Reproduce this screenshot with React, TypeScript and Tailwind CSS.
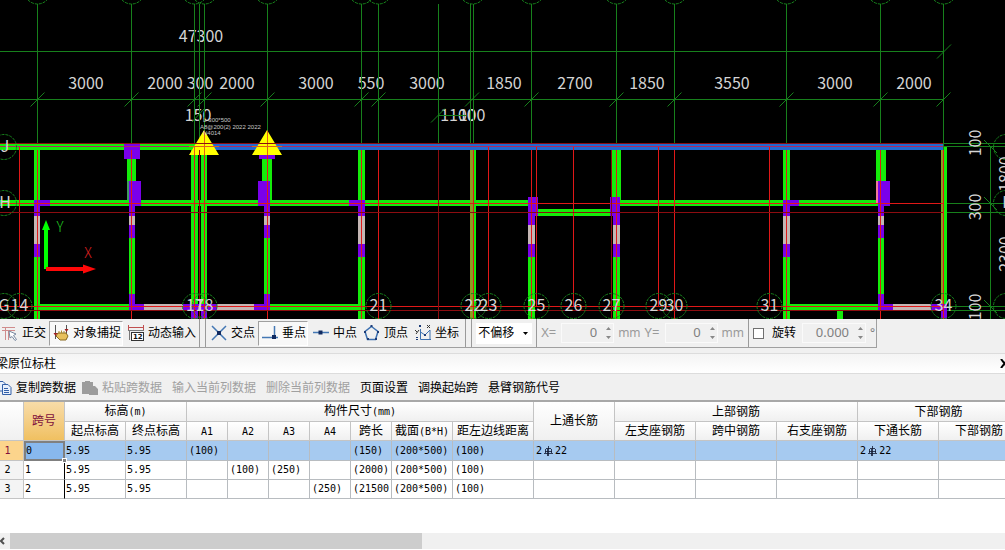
import React from 'react';

type Rect = [x: number, y: number, w: number, h: number];

const gridLines = [37.5, 131.5, 194.5, 199.5, 204.5, 267.5, 361.5, 378.5, 438.5, 470.5, 473.5, 531.5, 616.5, 674.5, 786.5, 880.5, 943.5];
const dimTicks = [37.5, 131.5, 194.5, 204.5, 267.5, 361.5, 378.5, 472, 531.5, 616.5, 674.5, 786.5, 880.5, 943.5];
const topBubbles = [37.5, 131.5, 194.5, 204.5, 267.5, 361.5, 378.5, 472.5, 531.5, 616.5, 674.5, 786.5, 880.5, 943.5];

const redLines = [37.5, 131.5, 194.5, 204.5, 267.5, 361.5, 378.5, 473.5, 531.5, 616.5, 674.5, 786.5, 880.5, 943.5];
const redShort = [19.5, 488.5, 536.5, 573.5, 658.5, 769.5];
const darkRed = [199.5, 438.5, 611.5];

const dims: [number, string][] = [
  [86, '3000'],
  [165, '2000'],
  [200, '300'],
  [237, '2000'],
  [316, '3000'],
  [371, '550'],
  [427, '3000'],
  [504, '1850'],
  [575, '2700'],
  [647, '1850'],
  [732, '3550'],
  [835, '3000'],
  [914, '2000'],
];

const bubbles: [number, string][] = [
  [4, 'G'],
  [19.5, '14'],
  [195, '17'],
  [204.5, '18'],
  [378.5, '21'],
  [473.5, '22'],
  [488.5, '23'],
  [536.5, '25'],
  [573.5, '26'],
  [611.5, '27'],
  [658.5, '29'],
  [674.5, '30'],
  [769.5, '31'],
  [943.5, '34'],
];

const greenBeams: Rect[] = [
  [0, 144, 204, 6],
  [0, 200, 528, 6],
  [620, 200, 258, 6],
  [538, 209, 72, 7],
  [34, 304, 95, 6],
  [270, 304, 88, 6],
  [790, 304, 88, 6],
  [34, 150, 6, 50],
  [34, 257, 6, 62],
  [127, 159, 9, 41],
  [129, 238, 6, 56],
  [191, 150, 7, 169],
  [201, 150, 6, 169],
  [262, 159, 10, 41],
  [264, 238, 6, 56],
  [358, 150, 7, 50],
  [358, 257, 7, 62],
  [473, 150, 3, 169],
  [528, 257, 7, 62],
  [612, 150, 9, 50],
  [613, 257, 7, 62],
  [783, 150, 7, 50],
  [783, 257, 7, 62],
  [876, 150, 10, 31],
  [878, 238, 6, 56],
  [944, 147, 3, 160],
  [837, 311, 6, 8],
];

const oliveBeams: Rect[] = [
  [470, 150, 3, 169],
  [941, 150, 3, 154],
];

const wallGaps: Rect[] = [
  [34, 216, 6, 28],
  [129, 216, 6, 9],
  [264, 216, 6, 9],
  [358, 216, 7, 28],
  [528, 225, 7, 19],
  [613, 225, 7, 19],
  [783, 216, 7, 28],
  [878, 216, 6, 9],
  [144, 304, 39, 6],
  [217, 304, 37, 6],
  [893, 304, 38, 6],
];

const columns: Rect[] = [
  [34, 200, 16, 6],
  [34, 206, 6, 10],
  [34, 244, 6, 13],
  [124, 144, 16, 15],
  [129, 181, 12, 25],
  [129, 206, 6, 10],
  [129, 225, 6, 13],
  [129, 294, 6, 16],
  [129, 304, 15, 6],
  [183, 304, 34, 6],
  [191, 304, 7, 15],
  [201, 304, 6, 15],
  [259, 144, 16, 15],
  [258, 181, 12, 25],
  [264, 206, 6, 10],
  [264, 225, 6, 13],
  [264, 294, 6, 16],
  [254, 304, 16, 6],
  [349, 200, 16, 6],
  [358, 206, 7, 10],
  [358, 244, 7, 13],
  [528, 197, 10, 19],
  [528, 216, 7, 9],
  [528, 244, 7, 13],
  [610, 197, 10, 19],
  [613, 216, 7, 9],
  [613, 244, 7, 13],
  [783, 200, 16, 6],
  [783, 206, 7, 10],
  [783, 244, 7, 13],
  [878, 181, 12, 25],
  [878, 206, 6, 10],
  [878, 225, 6, 13],
  [878, 294, 6, 16],
  [878, 304, 15, 6],
  [931, 304, 16, 6],
  [941, 304, 6, 15],
];

const sideDims: [number, number, string][] = [
  [981, 143, '100'],
  [981, 207, '300'],
  [981, 307, '100'],
  [1011, 174, '1800'],
  [1011, 254, '2300'],
];

function Rects({ items, className }: { items: Rect[]; className: string }) {
  return (
    <g className={className}>
      {items.map(([x, y, w, h], i) => (
        <rect key={i} x={x} y={y} width={w} height={h} />
      ))}
    </g>
  );
}

function Drawing() {
  return (
    <svg viewBox="0 0 1005 319" className="block h-auto w-full bg-black" role="img" aria-label="梁平面图">
      <g className="fill-[#d4d4d4] font-['Noto_Sans_CJK_SC',sans-serif] text-[16px]" textAnchor="middle">
        <text x="201" y="42">47300</text>
        {dims.map(([x, label]) => (
          <text key={x} x={x} y="89">
            {label}
          </text>
        ))}
        <text x="198" y="121">150</text>
        <text x="458" y="121">1100</text>
        <text x="472" y="121">100</text>
      </g>

      {/* Axis grid */}
      <g stroke="#17801c" fill="none" shapeRendering="crispEdges">
        {gridLines.map((x) => (
          <path key={x} d={`M${x} 4V150`} />
        ))}
        <path d="M0 51.5H944M0 99.5H944M438 115.5H466" />
        <path d="M944 143.5H1005M944 146.5H1005M944 203.5H1005M944 212.5H1005M944 306.5H1005M944 310.5H1005M990.5 147V319" />
      </g>
      <g stroke="#17801c" fill="none">
        {dimTicks.map((x) => (
          <path key={x} d={`M${x - 7} 106.5l14-14`} />
        ))}
        <path d="M937 58.5l14-14M431 122.5l14-14M192 122l12-13M984 140l13 13M984 197l13 13M984 300l13 13" />
      </g>
      <g stroke="#17801c" fill="none" strokeDasharray="3 1">
        {topBubbles.map((x) => (
          <circle key={x} cx={x} cy={-9} r={13} />
        ))}
      </g>

      {/* Beams and columns */}
      <Rects items={greenBeams} className="fill-[#14ec0a]" />
      <Rects items={oliveBeams} className="fill-[#8f9a20]" />
      <Rects items={wallGaps} className="fill-[#c4b6b4]" />
      <rect x="127" y="181" width="2" height="19" fill="#3f9a60" />
      <rect x="876" y="181" width="2" height="22" fill="#f07898" />
      <Rects items={columns} className="fill-[#7a00ea]" />
      <rect x="204" y="144" width="739" height="6" fill="#2268d0" />

      <g stroke="#e01818" fill="none" shapeRendering="crispEdges">
        {redLines.map((x) => (
          <path key={x} d={`M${x} 150V319`} />
        ))}
        {redShort.map((x) => (
          <path key={x} d={`M${x} 146V306`} />
        ))}
        <path d="M0 203.5H943M0 306.5H943" />
      </g>
      <path d="M0 146.5H943" stroke="#b02860" shapeRendering="crispEdges" />
      <path d="M204 130L219 155H189ZM267 130L282 155H252Z" fill="#ffff00" />
      <path d="M189 146.5H219M252 146.5H282M194.5 147V155M204.5 131V155M267.5 131V155" stroke="#e06018" shapeRendering="crispEdges" />
      <g stroke="#8c0c10" fill="none" shapeRendering="crispEdges">
        {darkRed.map((x) => (
          <path key={x} d={`M${x} 150V319`} />
        ))}
        <path d="M0 143.5H943M0 212.5H943M0 310.5H943" />
      </g>

      {/* Bubbles */}
      <g stroke="#17801c" fill="none" strokeDasharray="3 1">
        {bubbles.map(([x]) => (
          <circle key={x} cx={x} cy={306} r={12.5} />
        ))}
        <circle cx="4" cy="147" r="12.5" />
        <circle cx="4" cy="203" r="12.5" />
        <circle cx="1006" cy="147" r="12.5" />
        <circle cx="1006" cy="203" r="12.5" />
        <circle cx="1006" cy="306" r="12.5" />
      </g>

      <g className="fill-[#d4d4d4] font-['Noto_Sans_CJK_SC',sans-serif] text-[16px]" textAnchor="middle">
        {bubbles.map(([x, label]) => (
          <text key={x} x={x} y="311">
            {label}
          </text>
        ))}
        <text x="5" y="152">J</text>
        <text x="5" y="208">H</text>
        <text x="1008" y="208">H</text>
        {sideDims.map(([x, y, label]) => (
          <text key={`${x}-${y}`} transform={`translate(${x} ${y}) rotate(-90)`}>
            {label}
          </text>
        ))}
      </g>
      <g className="fill-[#c8c8c8] font-['Liberation_Sans',sans-serif] text-[6px]">
        <text x="203" y="122">L-300*500</text>
        <text x="200" y="129">A8@200(2) 2022 2022</text>
        <text x="203" y="135">N4014</text>
      </g>

      {/* UCS marker */}
      <path d="M44 269V230H42L46 220L50 230H48V269Z" fill="#00ff00" />
      <path d="M46 267H83V264.500L96 269L83 273.500V271H46Z" fill="#ff0808" />
      <g className="font-['Noto_Sans_CJK_SC',sans-serif] text-[14px] font-light" textAnchor="middle">
        <text x="60" y="232" fill="#20d020">Y</text>
        <text x="88" y="258" fill="#e02020">X</text>
      </g>
    </svg>
  );
}

const OrthoIcon = () => (
  <svg viewBox="0 0 16 16" className="size-4 shrink-0" fill="none">
    <path d="M0 2.500H13M0 5.500H13M3.500 2.500V15M6.500 5.500V15" stroke="#d08c8c" strokeWidth="1" />
    <path d="M7 6l7 3-2.500 1.500 3 4-1.500 1-3-4L8 13z" fill="#fff" stroke="#7888a0" />
  </svg>
);

const SnapIcon = () => (
  <svg viewBox="0 0 16 16" className="size-4 shrink-0" fill="none">
    <path d="M2.500 0V14M13.500 0V14M3 8.500H13" stroke="#555" />
    <path d="M5 8h8l2 3-2 4H7l-4-4z" fill="#e8c05c" stroke="#8a6a20" />
    <path d="M0.500 8l2 3 2-3zM11.500 4l2 3 2-3z" fill="#a02020" />
    <path d="M6 9V6M8.500 8V5.500M11 8V6" stroke="#b08a30" />
  </svg>
);

const DynInputIcon = () => (
  <svg viewBox="0 0 16 16" className="size-4 shrink-0" fill="none">
    <path d="M0.500 0V5M15.500 0V5M1 2.500H15" stroke="#c05050" />
    <path d="M0 5.500H16M1.500 6V15" stroke="#777" />
    <rect x="3.500" y="7.500" width="12" height="8" fill="#fff" stroke="#333" />
    <text x="5" y="14" className="font-['DejaVu_Sans',sans-serif] text-[7px] font-bold" fill="#111">12</text>
  </svg>
);

const CrossIcon = () => (
  <svg viewBox="0 0 16 16" className="size-4 shrink-0" fill="none">
    <path d="M1 1L15 15M15 1L1 15" stroke="#4478b4" strokeWidth="1.500" />
    <rect x="6" y="6" width="4" height="4" fill="#102a60" />
  </svg>
);

const PerpIcon = () => (
  <svg viewBox="0 0 16 16" className="size-4 shrink-0" fill="none">
    <path d="M0 12.500H16M12.500 1V12" stroke="#4478b4" strokeWidth="1.500" />
    <rect x="10" y="10" width="4" height="4" fill="#102a60" />
  </svg>
);

const MidIcon = () => (
  <svg viewBox="0 0 16 16" className="size-4 shrink-0" fill="none">
    <path d="M0 7.500H16" stroke="#4478b4" strokeWidth="1.500" />
    <rect x="5.500" y="5.500" width="4" height="4" fill="#102a60" />
  </svg>
);

const VertexIcon = () => (
  <svg viewBox="0 0 16 16" className="size-4 shrink-0" fill="none">
    <path d="M7.500 1.500L14 6.500L11.500 14.500H3.500L1 6.500Z" stroke="#3c70b0" strokeWidth="1.500" />
    <path d="M6.500 0h2v2h-2zM13 6h2v2h-2zM11 13h2v2h-2zM3 13h2v2H3zM0 6h2v2H0z" fill="#1c3c78" />
  </svg>
);

const CoordIcon = () => (
  <svg viewBox="0 0 16 16" className="size-4 shrink-0" fill="none">
    <path d="M5.500 4V14.500H16M5.500 14L5.500 7L10 10L15 5V14" stroke="#3c70b0" />
    <path d="M0 5l2 2m2-2L1 9M12 0l3 3m0-3l-3 3" stroke="#333" />
    <path d="M4 0h2v2H4zM9 9h2v2H9zM1 12h2v1H1zM1 14h2v1H1z" fill="#1c3c78" />
  </svg>
);

const CopyIcon = () => (
  <svg viewBox="0 0 16 16" className="size-4 shrink-0" fill="#e8f0fc" stroke="#3460a8">
    <path d="M1.500 1.500H7l3 3V11H1.500z" />
    <path d="M6.500 4.500H12l3 3V14.500H6.500zM8 8.500h4M8 10.500h5M8 12.500h5" />
  </svg>
);

const PasteIcon = () => (
  <svg viewBox="0 0 16 16" className="size-4 shrink-0" fill="#9c9c9c">
    <path d="M0 2h3V1h5v1h3v4h2l3 3v6H7v-1H0z" />
  </svg>
);

function ToolButton({ icon, label, pressed }: { icon: React.ReactNode; label: string; pressed?: boolean }) {
  return (
    <button
      type="button"
      aria-pressed={!!pressed}
      className={
        pressed
          ? 'flex h-[25px] shrink-0 items-center gap-1 whitespace-nowrap border border-t-[#a0a0a0] border-r-white border-b-white border-l-[#a0a0a0] bg-[#f8f8f8] pl-[3px] pr-px'
          : 'flex h-[25px] shrink-0 items-center gap-1 whitespace-nowrap border border-transparent pl-[3px] pr-px'
      }
    >
      {icon}
      {label}
    </button>
  );
}

function Separator() {
  return <div className="mx-px h-full w-[7px] shrink-0 border-x border-[#9a9a9a]" />;
}

function SpinBox({ label, value, wide }: { label: string; value: string; wide?: boolean }) {
  return (
    <span className="flex h-5 shrink-0 items-center border border-[#fafafa] pr-[2px]">
      <input
        type="text"
        aria-label={label}
        defaultValue={value}
        disabled
        className={
          wide
            ? 'w-[46px] bg-transparent text-right text-[13px] text-[#808080]'
            : 'w-[35px] bg-transparent text-right text-[13px] text-[#808080]'
        }
      />
      <svg viewBox="0 0 5 14" className="ml-[9px] h-[14px] w-[5px]" fill="#888">
        <path d="M0 4L2.500 1L5 4ZM0 10L2.500 13L5 10Z" />
      </svg>
    </span>
  );
}

function SnapToolbar() {
  return (
    <div className="overflow-hidden bg-[#f0f0f0] pb-[5px]">
      <div className="-ml-0.5 flex h-[29px] w-fit items-center border-r border-b border-[#a0a0a0]">
        <div className="flex items-center gap-px">
          <ToolButton icon={<OrthoIcon />} label="正交" />
          <ToolButton icon={<SnapIcon />} label="对象捕捉" pressed />
          <ToolButton icon={<DynInputIcon />} label="动态输入" />
        </div>
        <Separator />
        <div className="flex items-center gap-px">
          <ToolButton icon={<CrossIcon />} label="交点" />
          <ToolButton icon={<PerpIcon />} label="垂点" pressed />
          <ToolButton icon={<MidIcon />} label="中点" />
          <ToolButton icon={<VertexIcon />} label="顶点" />
          <ToolButton icon={<CoordIcon />} label="坐标" />
        </div>
        <div className="ml-1 h-full w-[7px] shrink-0 border-x border-[#9a9a9a]" />
        <div className="relative ml-1 flex h-[21px] items-center">
          <select aria-label="偏移方式" className="h-full w-14 appearance-none bg-white pl-0.5">
            <option>不偏移</option>
          </select>
          <svg viewBox="0 0 5 3" className="pointer-events-none absolute right-1 h-[3px] w-[5px]">
            <path d="M0 0H5L2.500 3Z" fill="#000" />
          </svg>
        </div>
        <div className="ml-1 flex h-full items-center gap-1 border-l border-[#9a9a9a] pl-1 text-[#9a9a9a]">
          <span className="w-4 text-[13px]">X=</span>
          <SpinBox label="X" value="0" />
          <span>mm</span>
          <span className="w-4 text-[13px]">Y=</span>
          <SpinBox label="Y" value="0" />
          <span>mm</span>
        </div>
        <div className="ml-1 flex h-full items-center gap-1 border-l border-[#9a9a9a] pl-1">
          <label className="flex items-center gap-2 whitespace-nowrap">
            <input type="checkbox" className="size-[11px] appearance-none border border-[#707070] bg-white" />
            旋转
          </label>
          <span className="ml-0.5">
            <SpinBox label="旋转角度" value="0.000" wide />
          </span>
          <span className="w-1.5 text-[#808080]">°</span>
        </div>
      </div>
    </div>
  );
}

const spanActions = [
  { label: '输入当前列数据', disabled: true },
  { label: '删除当前列数据', disabled: true },
  { label: '页面设置', disabled: false },
  { label: '调换起始跨', disabled: false },
  { label: '悬臂钢筋代号', disabled: false },
];

function SpanToolbar() {
  return (
    <div className="flex h-7 items-center gap-[10px] overflow-hidden border-b-2 border-[#a8a8a8] bg-[#f0f0f0] pt-0.5 whitespace-nowrap">
      <button type="button" className="-ml-1 flex shrink-0 items-center gap-1">
        <CopyIcon />
        复制跨数据
      </button>
      <button type="button" disabled className="-ml-1 flex shrink-0 items-center gap-1 text-[#a0a0a0]">
        <PasteIcon />
        粘贴跨数据
      </button>
      {spanActions.map((a) => (
        <button key={a.label} type="button" disabled={a.disabled} className="shrink-0 disabled:text-[#a0a0a0]">
          {a.label}
        </button>
      ))}
    </div>
  );
}

const HEAD = 'border-r border-b border-[#c4c4c4] bg-gradient-to-b from-white to-[#f0f0f0] p-0 text-center font-normal';
const MONO = "font-['DejaVu_Sans_Mono',monospace] text-[10px]";

const colWidths = [24, 41, 61, 61, 41, 41, 41, 41, 41, 61, 81, 81, 81, 81, 81, 81, 81];

const rows = [
  ['0', '5.95', '5.95', '(100)', '', '', '', '(150)', '(200*500)', '(100)', '2#22', '', '', '', '2#22', ''],
  ['1', '5.95', '5.95', '', '(100)', '(250)', '', '(2000)', '(200*500)', '(100)', '', '', '', '', '', ''],
  ['2', '5.95', '5.95', '', '', '', '(250)', '(21500', '(200*500)', '(100)', '', '', '', '', '', ''],
];

// HRB400 rebar mark between the count and the diameter
function Rebar({ value }: { value: string }) {
  const [count, size] = value.split('#');
  return (
    <span className="flex items-center gap-[2px] pl-px">
      {count}
      <svg viewBox="0 0 9 10" className="h-[10px] w-[9px]" fill="none" stroke="#101830" role="img" aria-label="HRB400">
        <path d="M4.500 0V10M0 7.500H9M2 2.500H7M1.500 3V7M7.500 3V7M3.500 3V10M1 5.500H8" strokeWidth="0.800" />
      </svg>
      {size}
    </span>
  );
}

function cellClass(r: number, c: number) {
  if (c === 0) {
    return r === 0
      ? 'relative border-2 border-[#808080] bg-[#88b8ee] p-0'
      : 'border-r border-b border-r-black border-b-[#c0c0c0] p-0 pl-px';
  }
  const indented = c >= 3 && c <= 9;
  return indented
    ? 'overflow-hidden border-r border-b border-[#b8bcc0] p-0 pl-0.5'
    : 'overflow-hidden border-r border-b border-[#b8bcc0] p-0 pl-px';
}

function SpanTable() {
  return (
    <div className="overflow-hidden">
      <table className="w-[1020px] table-fixed border-separate border-spacing-0 leading-4 whitespace-nowrap">
        <colgroup>
          {colWidths.map((w, i) => (
            <col key={i} style={{ width: w }} />
          ))}
        </colgroup>
        <thead>
          <tr className="h-5">
            <th rowSpan={2} className={HEAD} />
            <th
              rowSpan={2}
              className="border-r border-b border-[#c4c4c4] bg-gradient-to-b from-[#f8dca8] to-[#f0c060] p-0 text-center font-normal text-[#80103c]"
            >
              跨号
            </th>
            <th colSpan={2} className={HEAD}>
              标高<span className={MONO}>(m)</span>
            </th>
            <th colSpan={7} className={HEAD}>
              构件尺寸<span className={MONO}>(mm)</span>
            </th>
            <th rowSpan={2} className={HEAD}>上通长筋</th>
            <th colSpan={3} className={HEAD}>上部钢筋</th>
            <th colSpan={2} className={HEAD}>下部钢筋</th>
          </tr>
          <tr className="h-[19px]">
            <th className={HEAD}>起点标高</th>
            <th className={HEAD}>终点标高</th>
            {['A1', 'A2', 'A3', 'A4'].map((a) => (
              <th key={a} className={HEAD}>
                <span className={MONO}>{a}</span>
              </th>
            ))}
            <th className={HEAD}>跨长</th>
            <th className={HEAD}>
              截面<span className={MONO}>(B*H)</span>
            </th>
            <th className={HEAD}>距左边线距离</th>
            <th className={HEAD}>左支座钢筋</th>
            <th className={HEAD}>跨中钢筋</th>
            <th className={HEAD}>右支座钢筋</th>
            <th className={HEAD}>下通长筋</th>
            <th className={HEAD}>下部钢筋</th>
          </tr>
        </thead>
        <tbody className="font-['DejaVu_Sans_Mono',monospace] text-[10px]">
          {rows.map((row, r) => (
            <tr key={r} className={r === 0 ? 'h-[19px] bg-[#a6caf0]' : 'h-[19px] bg-white'}>
              <th
                className={
                  r === 0
                    ? 'border-r border-b border-[#c4c4c4] bg-[#fcd48c] p-0 pr-2 text-center font-normal text-[#80103c]'
                    : 'border-r border-b border-[#c4c4c4] bg-[#f4f4f4] p-0 pr-2 text-center font-normal'
                }
              >
                {r + 1}
              </th>
              {row.map((v, c) => (
                <td key={c} className={cellClass(r, c)}>
                  {v.includes('#') ? <Rebar value={v} /> : v}
                  {r === 0 && c === 0 && (
                    <span className="absolute -right-1 -bottom-1 z-10 size-[5px] border border-white bg-[#808080]" />
                  )}
                </td>
              ))}
            </tr>
          ))}
        </tbody>
      </table>
    </div>
  );
}

export default function App() {
  return (
    <div className="flex min-h-screen flex-col overflow-hidden bg-white font-['Noto_Sans','Noto_Sans_CJK_SC',sans-serif] text-xs text-black">
      <Drawing />
      <SnapToolbar />

      {/* Panel title */}
      <div className="flex h-[21px] items-center justify-between overflow-hidden border-y border-[#dcdcdc] bg-gradient-to-b from-[#f4f4f4] to-white">
        <h2 className="-ml-1 whitespace-nowrap">梁原位标柱</h2>
        <button type="button" aria-label="关闭" className="-mr-1 shrink-0">
          <svg viewBox="0 0 9 9" className="size-[9px]" stroke="#000" strokeWidth="2">
            <path d="M1 0L8 9M8 0L1 9" />
          </svg>
        </button>
      </div>

      <SpanToolbar />
      <SpanTable />
      <div className="flex-1" />

      {/* Horizontal scroll bar */}
      <div className="mb-px flex h-4 bg-[#f0f0f0]">
        <button type="button" aria-label="向左滚动" className="flex w-[10px] items-center">
          <svg viewBox="0 0 5 8" className="h-2 w-[5px]" fill="none" stroke="#505050" strokeWidth="2">
            <path d="M4 1L1 4L4 7" />
          </svg>
        </button>
        <div className="h-full w-[41%] bg-[#cdcdcd]" />
      </div>
    </div>
  );
}
